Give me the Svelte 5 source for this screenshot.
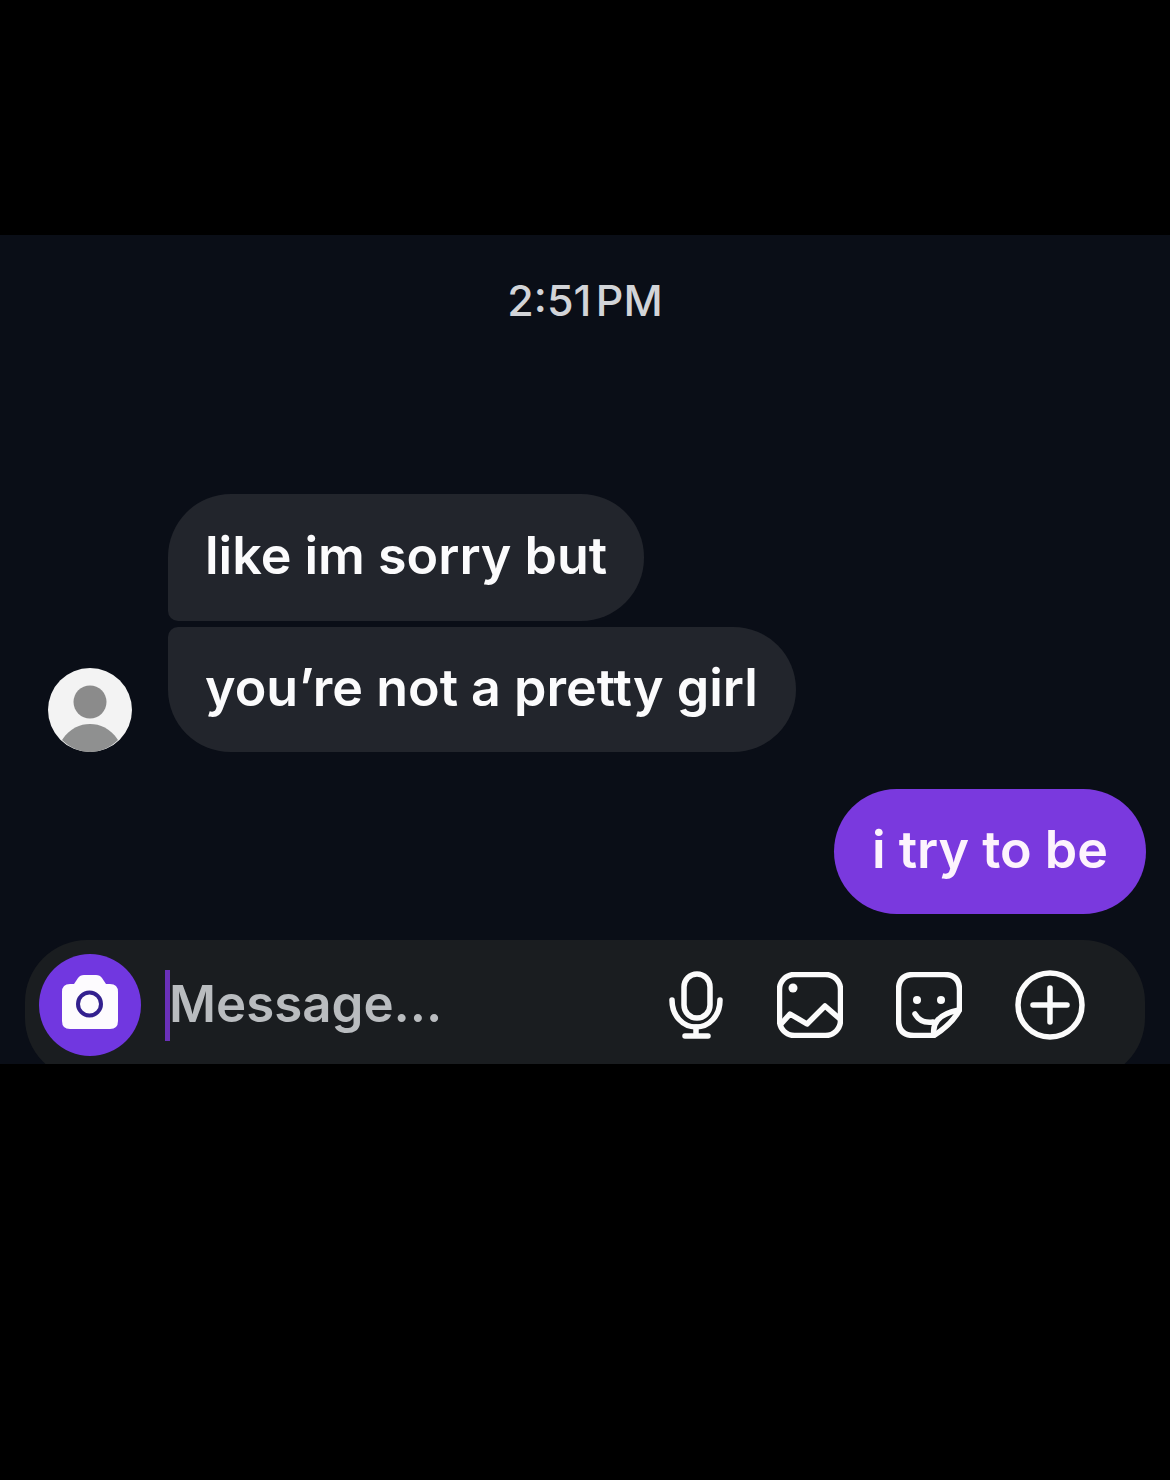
<script>
  let incoming = ['like im sorry but', 'you’re not a pretty girl'];
</script>

<div class="page">
  <div class="screen">
    <div class="time">2:51 PM</div>

    <div class="thread">
      <div class="avatar">
        <svg viewBox="0 0 84 84" width="84" height="84">
          <circle cx="42" cy="42" r="42" fill="#f3f3f3" />
          <circle cx="42" cy="34" r="16.5" fill="#8b8b8b" />
          <path d="M14 72 C22 60 32 56 42 56 C52 56 62 60 70 72 C62 80 52 84 42 84 C32 84 22 80 14 72 Z" fill="#8f9090" />
        </svg>
      </div>
      <div class="incoming">
        {#each incoming as text, i}
          <div class="bubble" class:first={i === 0} class:last={i === 1}>{text}</div>
        {/each}
      </div>
    </div>

    <div class="outgoing">i try to be</div>

    <div class="composer">
      <div class="camera">
        <svg viewBox="0 0 58 54" width="58" height="54">
          <path d="M9 9 H13 L17 3 Q19 0 23 0 H35 Q39 0 41 3 L45 9 H49 Q57 9 57 17 V46 Q57 54 49 54 H9 Q1 54 1 46 V17 Q1 9 9 9 Z" fill="#fdfbfe" />
          <circle cx="28.5" cy="29" r="11.5" fill="none" stroke="#33208f" stroke-width="4" />
        </svg>
      </div>
      <div class="caret"></div>
      <span class="placeholder">Message...</span>

      <div class="actions">
        <svg class="mic" viewBox="0 0 56 70" width="56" height="70">
          <rect x="16" y="4" width="26" height="44" rx="13" />
          <path d="M4 30 C4 46 15 57 28 57 C41 57 52 46 52 30" />
          <path d="M28 57 V66 M17 66 H40" />
        </svg>
        <svg class="image" viewBox="0 0 66 66" width="66" height="66">
          <rect x="2.5" y="2.5" width="61" height="61" rx="15" />
          <circle cx="16" cy="16" r="4.5" class="dot" />
          <path d="M4 52 L13 42 L30 52 L48 34 L63 47" />
        </svg>
        <svg class="sticker" viewBox="0 0 66 66" width="66" height="66">
          <path d="M38 63.5 H18 Q2.5 63.5 2.5 48 V18 Q2.5 2.5 18 2.5 H48 Q63.5 2.5 63.5 18 V38 Q56 52 38 63.5 Z" />
          <path d="M38 63 C36 52 42 42 63 38" />
          <path d="M19 42 C23 49 30 51 37 50" />
          <circle cx="21" cy="28" r="4" class="dot" />
          <circle cx="45" cy="28" r="4" class="dot" />
        </svg>
        <svg class="plus" viewBox="0 0 70 70" width="70" height="70">
          <circle cx="35" cy="35" r="32" />
          <path d="M35 18 V52 M18 35 H52" />
        </svg>
      </div>
    </div>
  </div>
</div>

<style>
  :global(body) {
    margin: 0;
    background: #000;
  }

  .page {
    padding-top: 235px;
    height: 1245px;
    font-family: Inter, "Liberation Sans", sans-serif;
  }

  .screen {
    height: 829px;
    overflow: hidden;
    background: #0a0e17;
  }

  .time {
    padding-top: 40px;
    text-align: center;
    font-size: 43px;
    line-height: 50px;
    font-weight: 500;
    word-spacing: -7px;
    color: #d2d4d8;
  }

  .thread {
    display: flex;
    align-items: flex-end;
    gap: 36px;
    margin-top: 169px;
    padding-left: 48px;
  }

  .avatar {
    display: flex;
  }

  .incoming {
    display: flex;
    flex-direction: column;
    align-items: flex-start;
    gap: 6px;
  }

  .bubble {
    height: 127px;
    padding: 0 37px 4px;
    box-sizing: border-box;
    display: flex;
    align-items: center;
    border-radius: 63px;
    background: #22252c;
    color: #fbfbfc;
    font-size: 52px;
    font-weight: 600;
  }

  .bubble.first {
    border-bottom-left-radius: 10px;
  }

  .bubble.last {
    border-top-left-radius: 10px;
    height: 125px;
    padding-right: 38px;
  }

  .outgoing {
    width: fit-content;
    height: 125px;
    margin: 37px 24px 0 auto;
    padding: 0 38px 4px;
    box-sizing: border-box;
    display: flex;
    align-items: center;
    border-radius: 63px;
    background: #7a39de;
    color: #fdf3fd;
    font-size: 52px;
    font-weight: 600;
  }

  .composer {
    display: flex;
    align-items: flex-start;
    height: 140px;
    margin: 26px 25px 0 25px;
    padding: 14px 60px 0 14px;
    box-sizing: border-box;
    border-radius: 62px;
    background: #1a1d20;
  }

  .camera {
    flex: none;
    width: 102px;
    height: 102px;
    padding-bottom: 6px;
    box-sizing: border-box;
    border-radius: 50%;
    background: #7137e0;
    display: flex;
    align-items: center;
    justify-content: center;
  }

  .caret {
    flex: none;
    width: 5px;
    height: 71px;
    margin: 16px 0 0 24px;
    background: #6a30b8;
  }

  .placeholder {
    margin: 20px 0 0 -1px;
    font-size: 51px;
    line-height: 60px;
    font-weight: 600;
    color: #b9bcbf;
  }

  .actions {
    margin-left: auto;
    margin-top: 16px;
    display: flex;
    align-items: center;
    gap: 53px;
  }

  svg {
    display: block;
  }

  .actions svg {
    fill: none;
    stroke: #fbfbfb;
    stroke-width: 5.5;
    stroke-linecap: round;
    stroke-linejoin: round;
  }

  .actions svg .dot {
    fill: #fbfbfb;
    stroke: none;
  }
</style>
